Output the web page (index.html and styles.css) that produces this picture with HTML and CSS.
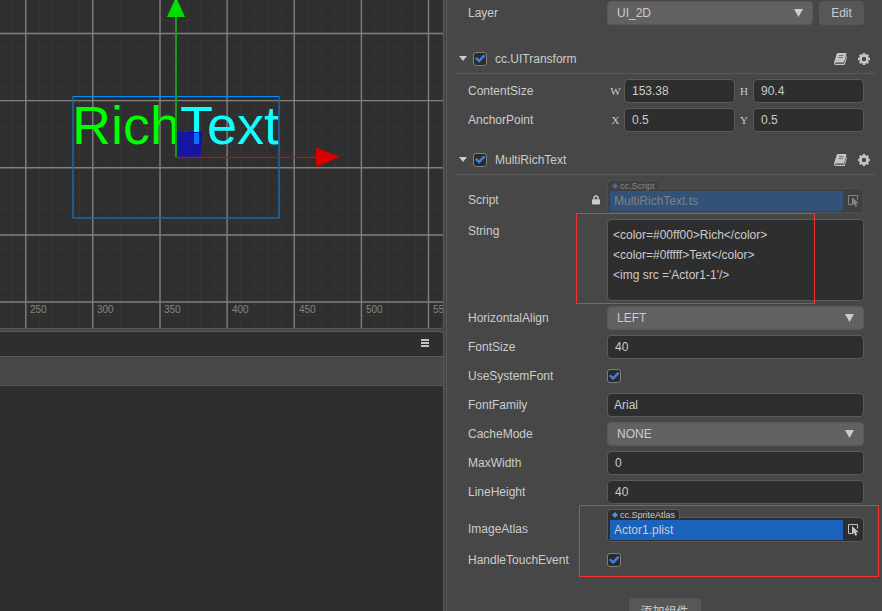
FILE: index.html
```html
<!DOCTYPE html>
<html lang="zh-CN">
<head>
    <meta charset="UTF-8">
    <meta name="viewport" content="width=device-width, initial-scale=1.0">
    <title>Scene Editor</title>
    <link rel="stylesheet" href="styles.css">
</head>
<body>
    <!-- shared icons -->
    <svg class="sprite" aria-hidden="true">
        <symbol id="icon-book" viewBox="0 0 13 12">
            <path d="M4.200 0h7.200c.8 0 1.200.6 1 1.300L10.300 8.600c-.2.600-.6.900-1.200.9H2c-.7 0-1 .3-.9.700.1.400.4.500.9.500h7.200c.6 0 1-.3 1.200-.9L12.500 3c.5.300.5.700.4 1.200l-1.800 6.500c-.2.800-.8 1.300-1.600 1.300H2C.6 12-.3 10.700.1 9.300L2.600 1.300C2.800.5 3.400 0 4.200 0z" fill="currentColor"/>
            <path d="M5 2.500h4.500M4.400 4.500h4.500" stroke="#777"/>
        </symbol>
        <symbol id="icon-gear" viewBox="0 0 12 12">
            <circle cx="6" cy="6" r="3.500" fill="none" stroke="currentColor" stroke-width="2.600"/>
            <path d="M6 0v2M6 10v2M0 6h2M10 6h2M1.800 1.800l1.300 1.300M8.900 8.900l1.300 1.300M10.200 1.800L8.900 3.100M3.100 8.900l-1.300 1.300" stroke="currentColor" stroke-width="2.400"/>
        </symbol>
        <symbol id="icon-pick" viewBox="0 0 12 12">
            <path d="M4.500 9.500h-4v-9h9v4" fill="none" stroke="currentColor"/>
            <path d="M4 2v8.500l2-1.700 1.300 3 1.900-.8-1.300-2.800h2.900z" fill="currentColor"/>
        </symbol>
        <symbol id="icon-lock" viewBox="0 0 8 10">
            <path d="M2 4.500V3a2 2 0 0 1 4 0v1.500" fill="none" stroke="currentColor" stroke-width="1.400"/>
            <rect y="4.200" width="8" height="5.200" rx=".8" fill="currentColor"/>
        </symbol>
    </svg>

    <div class="editor">
        <main class="workspace">
            <section class="scene">
                <svg class="canvas" width="100%" height="328">
                    <path class="grid-minor" d="M12.500 0v328M39.500 0v328M52.500 0v328M66.500 0v328M79.500 0v328M106.500 0v328M120.500 0v328M133.500 0v328M146.500 0v328M173.500 0v328M187.500 0v328M200.500 0v328M214.500 0v328M240.500 0v328M254.500 0v328M267.500 0v328M281.500 0v328M307.500 0v328M321.500 0v328M334.500 0v328M348.500 0v328M374.500 0v328M388.500 0v328M401.500 0v328M415.500 0v328M442.500 0v328"/>
                    <path class="grid-minor" d="M0 6.500h900M0 20.500h900M0 47.500h900M0 60.500h900M0 73.500h900M0 87.500h900M0 114.500h900M0 127.500h900M0 141.500h900M0 154.500h900M0 181.500h900M0 194.500h900M0 208.500h900M0 221.500h900M0 248.500h900M0 261.500h900M0 275.500h900M0 288.500h900M0 315.500h900"/>
                    <path class="grid-major" d="M25.800 0v328M92.800 0v328M160 0v328M227.100 0v328M294.200 0v328M361.400 0v328M428.500 0v328"/>
                    <path class="grid-major" d="M0 33.500h900M0 100.600h900M0 167.800h900M0 235h900M0 302h900"/>
                    <g class="ruler">
                        <text x="30" y="313">250</text>
                        <text x="97" y="313">300</text>
                        <text x="164" y="313">350</text>
                        <text x="232" y="313">400</text>
                        <text x="299" y="313">450</text>
                        <text x="366" y="313">500</text>
                        <text x="433" y="313">550</text>
                    </g>

                    <!-- selected node -->
                    <text class="rich" x="72" y="144" fill="#00ff00">Rich</text>
                    <text class="rich" x="180" y="144" fill="#0fffff">Text</text>
                    <path d="M73 96v122h206V96" fill="none" stroke="#1a6ba8" stroke-width="1.500"/>
                    <path d="M73 96.500h206" stroke="#0090ff"/>

                    <!-- move gizmo -->
                    <rect x="177" y="132" width="24" height="25" fill="#00f" fill-opacity=".55"/>
                    <path d="M188 132.500h13v12" fill="none" stroke="#0000d8"/>
                    <path d="M176 157V16" stroke="#1a9a1a" stroke-width="2"/>
                    <path d="M176 -3l9 20h-18z" fill="#00e000"/>
                    <path d="M176 157.300h140" stroke="#b01414" stroke-width="1.300"/>
                    <path d="M316 147.500l24 9.500-24 10z" fill="#d80000"/>
                </svg>
            </section>

            <section class="console">
                <header class="console-head">
                    <button class="icon-btn" aria-label="Menu">
                        <svg width="8" height="8"><path d="M0 1h8M0 4h8M0 7h8" stroke="currentColor" stroke-width="1.800"/></svg>
                    </button>
                </header>
                <div class="console-bar"></div>
            </section>
        </main>

        <aside class="inspector">
            <div class="row">
                <label for="layer">Layer</label>
                <div class="value layer">
                    <div class="select"><select id="layer"><option>UI_2D</option></select></div>
                    <button class="btn">Edit</button>
                </div>
            </div>

            <section class="component first">
                <header class="component-head">
                    <span class="caret"></span>
                    <input type="checkbox" id="transform" checked>
                    <label for="transform">cc.UITransform</label>
                    <button class="icon-btn" aria-label="Help"><svg width="13" height="12"><use href="#icon-book"/></svg></button>
                    <button class="icon-btn" aria-label="Settings"><svg width="12" height="12"><use href="#icon-gear"/></svg></button>
                </header>
                <div class="props">
                    <div class="row">
                        <span>ContentSize</span>
                        <div class="value pair">
                            <label for="size-w">W</label><input type="text" id="size-w" value="153.38">
                            <label for="size-h">H</label><input type="text" id="size-h" value="90.4">
                        </div>
                    </div>
                    <div class="row">
                        <span>AnchorPoint</span>
                        <div class="value pair">
                            <label for="anchor-x">X</label><input type="text" id="anchor-x" value="0.5">
                            <label for="anchor-y">Y</label><input type="text" id="anchor-y" value="0.5">
                        </div>
                    </div>
                </div>
            </section>

            <section class="component">
                <header class="component-head">
                    <span class="caret"></span>
                    <input type="checkbox" id="richtext" checked>
                    <label for="richtext">MultiRichText</label>
                    <button class="icon-btn" aria-label="Help"><svg width="13" height="12"><use href="#icon-book"/></svg></button>
                    <button class="icon-btn" aria-label="Settings"><svg width="12" height="12"><use href="#icon-gear"/></svg></button>
                </header>
                <div class="props">
                    <div class="row asset-row">
                        <label for="script">Script <svg class="lock" width="8" height="10"><use href="#icon-lock"/></svg></label>
                        <div class="value asset disabled">
                            <span class="asset-type">cc.Script</span>
                            <div class="asset-box">
                                <input type="text" id="script" value="MultiRichText.ts" disabled>
                                <button class="icon-btn" aria-label="Pick script" disabled><svg width="12" height="12"><use href="#icon-pick"/></svg></button>
                            </div>
                        </div>
                    </div>
                    <div class="row string-row">
                        <label for="string">String</label>
                        <textarea class="value" id="string" spellcheck="false">&lt;color=#00ff00&gt;Rich&lt;/color&gt;
&lt;color=#0fffff&gt;Text&lt;/color&gt;
&lt;img src ='Actor1-1'/&gt;</textarea>
                        <div class="mark mark-string"></div>
                    </div>
                    <div class="row">
                        <label for="align">HorizontalAlign</label>
                        <div class="value select"><select id="align"><option>LEFT</option></select></div>
                    </div>
                    <div class="row">
                        <label for="font-size">FontSize</label>
                        <input class="value number" type="text" id="font-size" value="40">
                    </div>
                    <div class="row">
                        <label for="system-font">UseSystemFont</label>
                        <input type="checkbox" id="system-font" checked>
                    </div>
                    <div class="row">
                        <label for="font-family">FontFamily</label>
                        <input class="value" type="text" id="font-family" value="Arial">
                    </div>
                    <div class="row">
                        <label for="cache">CacheMode</label>
                        <div class="value select"><select id="cache"><option>NONE</option></select></div>
                    </div>
                    <div class="row">
                        <label for="max-width">MaxWidth</label>
                        <input class="value number" type="text" id="max-width" value="0">
                    </div>
                    <div class="row">
                        <label for="line-height">LineHeight</label>
                        <input class="value number" type="text" id="line-height" value="40">
                    </div>
                    <div class="marked">
                        <div class="row asset-row">
                            <label for="atlas">ImageAtlas</label>
                            <div class="value asset">
                                <span class="asset-type">cc.SpriteAtlas</span>
                                <div class="asset-box">
                                    <input type="text" id="atlas" value="Actor1.plist">
                                    <button class="icon-btn" aria-label="Pick atlas"><svg width="12" height="12"><use href="#icon-pick"/></svg></button>
                                </div>
                            </div>
                        </div>
                        <div class="row">
                            <label for="touch">HandleTouchEvent</label>
                            <input type="checkbox" id="touch" checked>
                        </div>
                        <div class="mark mark-atlas"></div>
                    </div>
                </div>
            </section>

            <button class="btn add">添加组件</button>
        </aside>
    </div>
</body>
</html>
```
FILE: styles.css
```css
/* global styles */
* {
    margin: 0;
    padding: 0;
    box-sizing: border-box;
}

body {
    background: #474747;
    color: #ccc;
    font-family: "Liberation Sans", "Noto Sans CJK SC", sans-serif;
    font-size: 12px;
    height: 100vh;
    overflow: hidden;
}

input,
select,
textarea,
button {
    font: inherit;
    color: inherit;
}

.sprite {
    position: absolute;
    width: 0;
    height: 0;
}

.editor {
    display: grid;
    grid-template-columns: minmax(0, 1fr) 436px;
    gap: 2px;
    height: 100%;
}

/* left side */
.workspace {
    display: flex;
    flex-direction: column;
    gap: 2px;
    min-width: 0;
}

.scene {
    background: #2f2f2f;
    border: solid #585858;
    border-width: 0 1px 1px 0;
    border-radius: 0 0 4px 0;
    overflow: hidden;
}

.canvas {
    display: block;
}

.grid-minor {
    stroke: #343434;
}

.grid-major {
    stroke: #808080;
    stroke-width: 1.4;
}

.ruler {
    fill: #858585;
    font-size: 10px;
}

.rich {
    font-size: 54px;
}

.console {
    flex: 1;
    background: #2e2e2e;
    border: solid #585858;
    border-width: 1px 1px 0 0;
    border-radius: 0 4px 0 0;
    overflow: hidden;
}

.console-head {
    display: flex;
    align-items: center;
    justify-content: flex-end;
    height: 24px;
    padding: 0 14px 2px 0;
}

.console-bar {
    height: 30px;
    background: #474747;
    border: solid #585858;
    border-width: 1px 0;
}

/* inspector */
.inspector {
    border-left: 1px solid #585858;
    padding-top: 1px;
    overflow: hidden;
}

.row {
    position: relative;
    display: grid;
    grid-template-columns: 139px minmax(0, 1fr);
    align-items: center;
    min-height: 24px;
    margin: 0 18px 5px 21px;
}

.component {
    margin-top: 13px;
}

.component.first {
    margin-top: 19px;
}

.component-head {
    display: flex;
    align-items: center;
    height: 30px;
    margin: 0 7px 5px 10px;
    padding: 0 5px 0 2px;
    border-bottom: 1px solid #5a5a5a;
}

.component-head label {
    flex: 1;
    margin-left: 8px;
}

.component-head .icon-btn {
    margin-left: 11px;
}

.caret {
    width: 8px;
    height: 5px;
    margin-right: 6px;
    background: #ccc;
    clip-path: polygon(0 0, 100% 0, 50% 100%);
}

.icon-btn {
    display: flex;
    background: none;
    border: none;
    color: #c4c4c4;
}

/* fields */
input[type="text"],
textarea {
    width: 100%;
    height: 24px;
    padding: 0 6px;
    background: #2e2e2e;
    border: 1px solid #5a5a5a;
    border-radius: 4px;
    outline: none;
}

input.number,
.pair input[type="text"] {
    padding: 0 7px;
}

textarea {
    display: block;
    height: 82px;
    padding: 5px;
    line-height: 20px;
    resize: none;
    overflow: hidden;
}

input[type="checkbox"] {
    appearance: none;
    width: 14px;
    height: 14px;
    background: #2b2b2b;
    border: 1px solid #808080;
    border-radius: 3px;
}

input[type="checkbox"]:checked::before {
    content: "";
    display: block;
    width: 12px;
    height: 12px;
    background: #4080e0;
    clip-path: polygon(8% 50%, 24% 38%, 42% 57%, 80% 16%, 96% 30%, 43% 86%);
}

.select {
    position: relative;
}

.select::after {
    content: "";
    position: absolute;
    top: 8px;
    right: 10px;
    width: 9px;
    height: 8px;
    background: #ccc;
    clip-path: polygon(0 0, 100% 0, 50% 100%);
    pointer-events: none;
}

select {
    appearance: none;
    display: block;
    width: 100%;
    height: 24px;
    padding: 0 9px;
    background: #616161;
    border: 1px solid #585858;
    border-radius: 4px;
    outline: none;
}

.btn {
    height: 24px;
    background: #575757;
    border: none;
    border-radius: 4px;
}

.layer {
    display: grid;
    grid-template-columns: minmax(0, 1fr) 45px;
    gap: 6px;
}

.pair {
    display: grid;
    grid-template-columns: 17px minmax(0, 1fr) 18px minmax(0, 1fr);
    align-items: center;
}

.pair label {
    font-family: "Liberation Serif", serif;
    font-size: 11px;
    text-align: center;
}

/* asset slots */
.asset-row {
    align-items: start;
    min-height: 34px;
}

.asset-row label {
    display: flex;
    align-items: center;
    justify-content: space-between;
    height: 34px;
    padding: 6px 7px 0 0;
}

.asset {
    position: relative;
    padding-top: 8px;
}

.asset-type {
    position: absolute;
    top: 0;
    left: 0;
    display: flex;
    align-items: center;
    gap: 2px;
    height: 10px;
    padding: 1px 4px 0 4px;
    background: #2e2e2e;
    border: solid #5a5a5a;
    border-width: 1px 1px 0;
    border-radius: 4px 4px 0 0;
    font-size: 9px;
    line-height: 9px;
}

.asset-type::before {
    content: "";
    width: 6px;
    height: 6px;
    background: #4f8fdc;
    clip-path: polygon(50% 0, 100% 50%, 50% 100%, 0 50%);
}

.asset-box {
    display: flex;
    align-items: center;
    height: 25px;
    padding: 0 3px 0 2px;
    background: #2e2e2e;
    border: 1px solid #5a5a5a;
    border-radius: 0 4px 4px 4px;
}

.asset-box input[type="text"] {
    flex: 1;
    min-width: 0;
    height: 20px;
    padding: 0 4px;
    background: #1a62bb;
    border: none;
    border-radius: 0;
}

.asset-box .icon-btn {
    margin-left: 5px;
}

.disabled .asset-type,
.disabled .asset-box {
    background: #404040;
    border-color: #4e4e4e;
    color: #888;
}

.disabled .asset-type::before {
    background: #4a6a94;
}

.disabled input[type="text"] {
    background: #335277;
    color: #7c8189;
}

.disabled .icon-btn {
    color: #858585;
}

.string-row {
    align-items: start;
}

.string-row label {
    line-height: 24px;
}

/* red highlight frames */
.marked {
    position: relative;
}

.mark {
    position: absolute;
    border: 1px solid #f5322f;
    pointer-events: none;
}

.mark-string {
    top: -6px;
    bottom: -3px;
    left: 108px;
    width: 239px;
}

.mark-atlas {
    top: -4px;
    right: 3px;
    bottom: -5px;
    left: 132px;
}

.add {
    display: block;
    width: 72px;
    margin: 26px auto 0;
}
```
